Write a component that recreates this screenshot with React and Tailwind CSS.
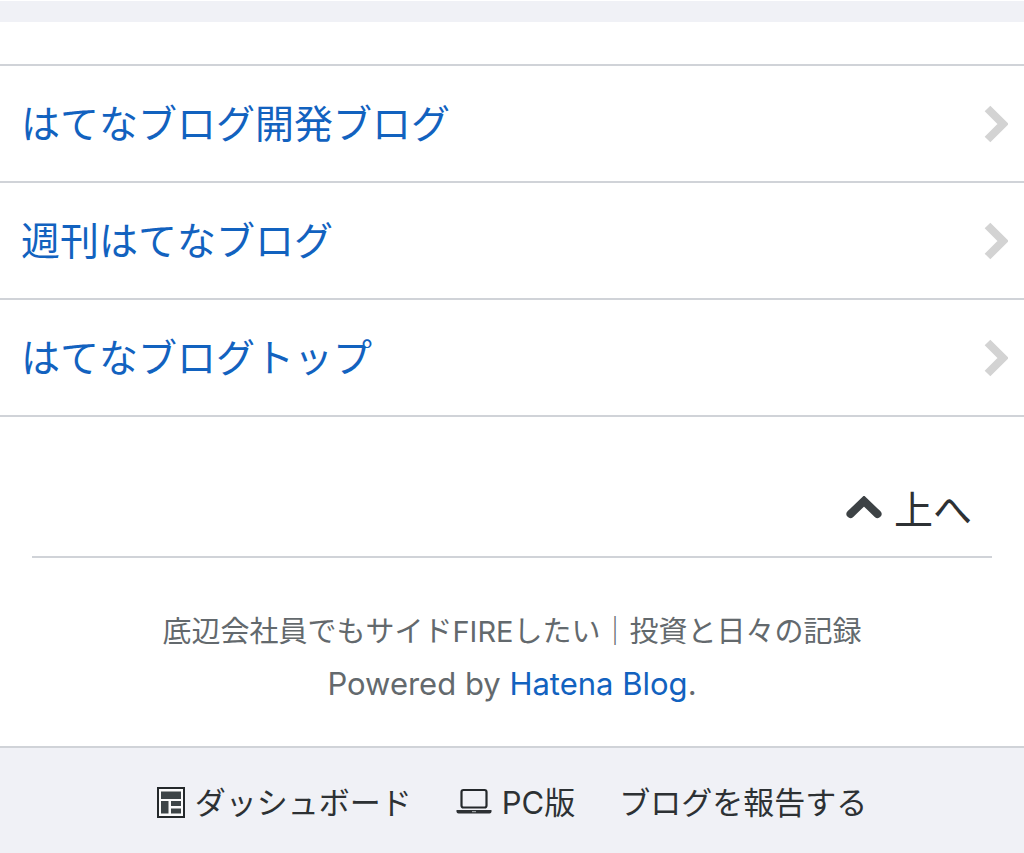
const links = [
  { label: "はてなブログ開発ブログ", href: "#staff" },
  { label: "週刊はてなブログ", href: "#weekly" },
  { label: "はてなブログトップ", href: "#top-page" },
];

const ChevronRight = () => (
  <svg className="h-[38px] w-6 shrink-0" viewBox="0 0 24 38" aria-hidden="true">
    <path d="M3.5 3.5 19 19 3.5 34.5" fill="none" stroke="#d3d3d3" strokeWidth="8" />
  </svg>
);

const ChevronUp = () => (
  <svg className="h-7 w-9" viewBox="0 0 36 28" aria-hidden="true">
    <path
      d="M4.5 18 18 5 31.5 18"
      fill="none"
      stroke="#3d4245"
      strokeWidth="8"
      strokeLinecap="round"
    />
  </svg>
);

const DashboardIcon = () => (
  <svg className="h-8 w-7" viewBox="0 0 28 32" aria-hidden="true">
    <rect x="1" y="1" width="26" height="29" fill="#fafafb" stroke="#24282b" strokeWidth="2" />
    <g fill="#3d4447">
      <rect x="4" y="4.5" width="20" height="7.5" />
      <rect x="4" y="14" width="7.5" height="12.5" />
      <rect x="14" y="14" width="10" height="5" />
      <rect x="14" y="21.5" width="10" height="5" />
    </g>
  </svg>
);

const LaptopIcon = () => (
  <svg className="h-8 w-9" viewBox="0 0 36 32" aria-hidden="true">
    <rect x="5.5" y="3" width="25" height="17.5" rx="2" fill="none" stroke="#24282b" strokeWidth="2.2" />
    <path d="M.5 23h35v1.5a2 2 0 0 1-2 2h-31a2 2 0 0 1-2-2z" fill="#2d3134" />
    <rect x="16" y="24" width="4" height="1.2" fill="#9a9ea1" />
  </svg>
);

const App = () => {
  return (
    <div className="bg-white font-['Inter','Noto_Sans_CJK_JP',sans-serif] text-[#2d3134]" lang="ja">
      <div className="mt-px h-[21px] bg-[#f0f1f6]" />

      <ul className="mt-[42px] border-t-2 border-[#d0d3d8]">
        {links.map((link) => (
          <li key={link.href} className="border-b-2 border-[#d0d3d8]">
            <a
              href={link.href}
              className="flex h-[115px] items-center justify-between pr-4 pl-[21px] text-[39px] leading-[56px] text-[#1262bf]"
            >
              {link.label}
              <ChevronRight />
            </a>
          </li>
        ))}
      </ul>

      <div className="mx-8 flex justify-end border-b-2 border-[#d0d3d8] pt-16 pr-5 pb-[17px]">
        <a href="#top" className="flex items-center gap-3 text-[39px] leading-[58px]">
          <ChevronUp />
          上へ
        </a>
      </div>

      <footer>
        <div className="px-8 pt-12 pb-9 text-center leading-[52px] text-[#63696d]">
          <p className="text-[29px] leading-[52px]">底辺会社員でもサイドFIREしたい｜投資と日々の記録</p>
          <p className="text-[31px] leading-[52px]">
            Powered by{" "}
            <a href="#hatena" className="text-[#1262bf]">
              Hatena Blog
            </a>
            .
          </p>
        </div>

        <nav className="flex items-center justify-center gap-11 border-t-2 border-[#d0d3d8] bg-[#f0f1f6] pt-8 pb-7 text-[31px] leading-[46px]">
          <a href="#dashboard" className="flex items-center gap-2.5">
            <DashboardIcon />
            ダッシュボード
          </a>
          <a href="#pc" className="flex items-center gap-2.5">
            <LaptopIcon />
            PC版
          </a>
          <a href="#report">ブログを報告する</a>
        </nav>
      </footer>
    </div>
  );
};

export default App;
